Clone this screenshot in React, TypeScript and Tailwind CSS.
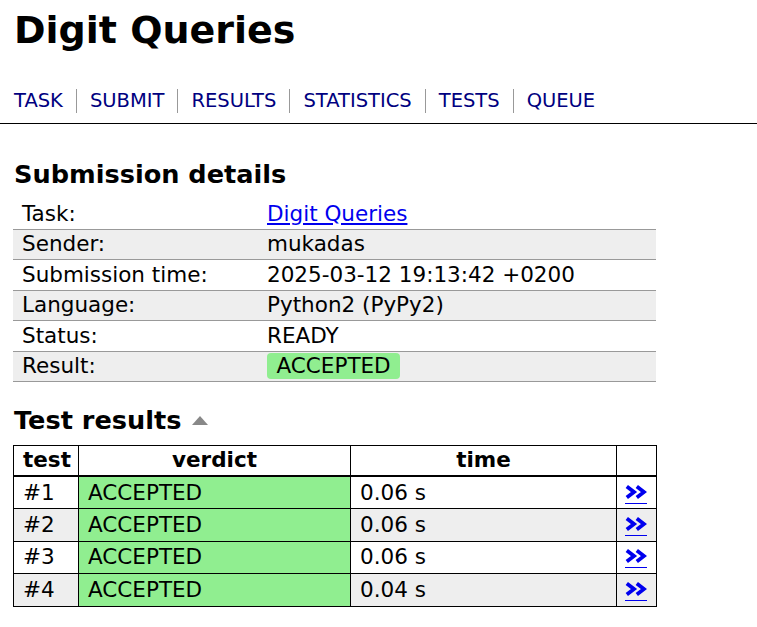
import React from "react";

const navItems = ["TASK", "SUBMIT", "RESULTS", "STATISTICS", "TESTS", "QUEUE"];

const details: { label: string; value: React.ReactNode }[] = [
  {
    label: "Task:",
    value: (
      <a href="#" className="text-[#0000ee] underline">
        Digit Queries
      </a>
    ),
  },
  { label: "Sender:", value: "mukadas" },
  { label: "Submission time:", value: "2025-03-12 19:13:42 +0200" },
  { label: "Language:", value: "Python2 (PyPy2)" },
  { label: "Status:", value: "READY" },
  {
    label: "Result:",
    value: (
      <span className="inline-block h-[26px] rounded-[4px] bg-[#90ee90] px-[9.5px] leading-[26px]">
        ACCEPTED
      </span>
    ),
  },
];

const tests = [
  { id: "#1", time: "0.06 s" },
  { id: "#2", time: "0.06 s" },
  { id: "#3", time: "0.06 s" },
  { id: "#4", time: "0.04 s" },
];

function DoubleChevron() {
  return (
    <a href="#" className="flex w-fit flex-col items-start">
      <svg width="22" height="14" viewBox="0 0 22 14" className="block">
        <path d="M1.8 1.5 L9 7 L1.8 12.5" fill="none" stroke="#0000ee" strokeWidth="3.8" strokeLinejoin="miter" />
        <path d="M11.8 1.5 L19 7 L11.8 12.5" fill="none" stroke="#0000ee" strokeWidth="3.8" strokeLinejoin="miter" />
      </svg>
      <span className="mt-[4px] block h-px w-[22px] bg-[#0000ee]" />
    </a>
  );
}

export default function App() {
  return (
    <div className="min-h-screen bg-white font-[DejaVu_Sans,Verdana,sans-serif] text-black">
      <header>
        <h1 className="pl-[14px] pt-[11px] text-[38px] font-bold leading-none">Digit Queries</h1>
        <nav className="mt-[40px] flex pl-[14px] text-[19.5px] leading-[24px]">
          {navItems.map((item, i) => (
            <a
              key={item}
              href="#"
              className={
                i === 0
                  ? "pr-[13px] text-[#000080]"
                  : "border-l border-[#999] px-[13px] text-[#000080]"
              }
            >
              {item}
            </a>
          ))}
        </nav>
        <div className="mt-[10px] h-px bg-black" />
      </header>

      <main className="pl-[13px] text-[21.5px]">
        <h2 className="mt-[38px] pl-px text-[25.6px] font-bold leading-none">Submission details</h2>
        <table className="mt-[11px] w-[643px] table-fixed border-collapse">
          <colgroup>
            <col className="w-[245px]" />
            <col />
          </colgroup>
          <tbody>
            {details.map((d, i) => (
              <tr
                key={d.label}
                className={(i % 2 === 1 ? "bg-[#eeeeee] " : "") + "h-[30.5px] border-b border-[#999]"}
              >
                <td className="px-[9px] py-0 align-middle leading-[24px]">{d.label}</td>
                <td className="px-[9px] py-0 align-middle leading-[24px]">{d.value}</td>
              </tr>
            ))}
          </tbody>
        </table>

        <h2 className="mt-[26px] flex items-center pl-px text-[25.6px] font-bold leading-none">
          Test results
          <span className="ml-[11px] inline-block h-0 w-0 border-b-[9px] border-l-[8px] border-r-[8px] border-b-[#888] border-l-transparent border-r-transparent" />
        </h2>

        <table className="mt-[11px] w-[643px] table-fixed border-collapse border border-black">
          <colgroup>
            <col className="w-[65px]" />
            <col className="w-[272px]" />
            <col className="w-[266px]" />
            <col className="w-[40px]" />
          </colgroup>
          <thead>
            <tr className="h-[31px] border-b-2 border-black">
              <th className="border border-b-2 border-black px-[9px] text-center font-bold leading-[24px]">test</th>
              <th className="border border-b-2 border-black px-[9px] text-center font-bold leading-[24px]">verdict</th>
              <th className="border border-b-2 border-black px-[9px] text-center font-bold leading-[24px]">time</th>
              <th className="border border-b-2 border-black px-[9px]" />
            </tr>
          </thead>
          <tbody>
            {tests.map((t, i) => (
              <tr key={t.id} className={(i % 2 === 1 ? "bg-[#eeeeee] " : "") + "h-[32.5px]"}>
                <td className="border border-black px-[9px] leading-[24px]">{t.id}</td>
                <td className="border border-black bg-[#90ee90] px-[9px] leading-[24px]">ACCEPTED</td>
                <td className="border border-black px-[9px] leading-[24px]">{t.time}</td>
                <td className="border border-black pl-[8px] pr-0 pt-[3px] align-middle leading-none">
                  <DoubleChevron />
                </td>
              </tr>
            ))}
          </tbody>
        </table>
      </main>
    </div>
  );
}
